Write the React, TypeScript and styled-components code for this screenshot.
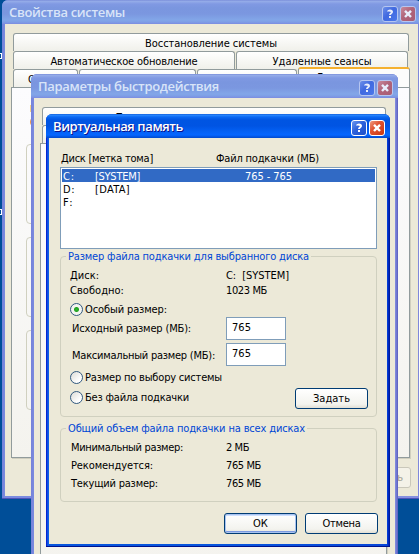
import React, { useLayoutEffect, useRef, useState } from 'react';
import styled, { createGlobalStyle, css } from 'styled-components';

const Global = createGlobalStyle`
  *, *::before, *::after { box-sizing: border-box; }
  body { margin: 0; overflow: hidden; }
`;

const Desktop = styled.div`
  position: relative;
  width: 419px;
  height: 554px;
  overflow: hidden;
  background: #004e98;
  font: 11px/13px 'DejaVu Sans Condensed', 'DejaVu Sans', Tahoma, sans-serif;
  font-stretch: condensed;
  color: #000;
`;

const IconLabelEdge = styled.div<{ $top: number }>`
  position: absolute;
  left: -4px;
  top: ${p => p.$top}px;
  width: 6px;
  height: 6px;
  border: 1px solid #fff;
`;

const Span = styled.span`
  display: inline-block;
  justify-self: start;
  white-space: pre;
`;

/* Text whose tracking is adjusted so that it fills the given width. */
function Text({ w, children }: { w: number; children: string }) {
  const ref = useRef<HTMLSpanElement>(null);
  const [tracking, setTracking] = useState(0);
  useLayoutEffect(() => {
    if (ref.current) {
      setTracking((w - ref.current.getBoundingClientRect().width) / children.length);
    }
  }, [w, children]);
  return <Span ref={ref} style={{ letterSpacing: tracking }}>{children}</Span>;
}

const Window = styled.section<{ $x: number; $y: number; $w: number; $h: number; $active?: boolean }>`
  position: absolute;
  left: ${p => p.$x}px;
  top: ${p => p.$y}px;
  width: ${p => p.$w}px;
  height: ${p => p.$h}px;
  display: flex;
  flex-direction: column;
  overflow: hidden;
  padding: 0 3px 3px;
  border-radius: 6px 6px 0 0;
  background: ${p => (p.$active
    ? 'linear-gradient(90deg, #0019cf 0, #0831d9 1px, #166aee 2px, #0855dd 3px, #0855dd 50%, #0846d8 calc(100% - 3px), #0030d0 calc(100% - 2px), #00138c 100%)'
    : 'linear-gradient(90deg, #7582d8 0, #7b8be0 3px, #7b8be0 50%, #8690e0 calc(100% - 3px), #6a70cc calc(100% - 1px), #5a5cbb 100%)')};
  box-shadow: inset 0 -1px 0 ${p => (p.$active ? '#00138c' : '#4f53b9')};
`;

const TitleBar = styled.header<{ $active?: boolean }>`
  flex: none;
  display: flex;
  align-items: center;
  gap: 2px;
  height: 24px;
  margin: 0 -3px;
  padding: 3px 5px 0 7px;
  font: 600 13px/18px 'Open Sans', 'Noto Sans', sans-serif;
  ${p => (p.$active
    ? css`
        color: #fff;
        text-shadow: 1px 1px 0 #0f1089;
        background: linear-gradient(#0a50d0 0, #2b8bff 1px, #0a68f2 3px, #0055e2 6px, #0054e3 12px, #0462f6 18px, #0566ff 21px, #0149cd 24px);
      `
    : css`
        color: #d8e4f8;
        background: linear-gradient(#7083d5 0, #97aee9 1px, #8099e3 4px, #7a96df 8px, #7b97e0 14px, #82a6e8 20px, #7e9ee6 22px, #7b8be0 24px);
      `)}
`;

const TitleText = styled.h1`
  flex: 1;
  height: 21px;
  margin: 0;
  font: inherit;
`;

const CaptionButton = styled.button<{ $kind: 'help' | 'close'; $active?: boolean }>`
  display: grid;
  place-items: center;
  width: 16px;
  height: 16px;
  padding: 0;
  border: 1px solid ${p => (p.$active ? '#fff' : '#b6c6f0')};
  border-radius: 3px;
  color: ${p => (p.$active ? '#fff' : '#e8edfb')};
  background: ${p => {
    if (p.$kind === 'help') {
      return p.$active
        ? 'linear-gradient(135deg, #6b97f0, #2d61db 45%, #1c4fc8)'
        : 'linear-gradient(135deg, #6d8fe8, #4069e0 45%, #4c78ea)';
    }
    return p.$active
      ? 'linear-gradient(135deg, #f09a80, #e05331 40%, #c93610)'
      : 'linear-gradient(135deg, #c98a9c, #b0647a 45%, #a85c74)';
  }};
`;

const Glyph = styled.svg`
  display: block;
  width: 14px;
  height: 14px;
  fill: none;
  stroke: currentColor;
  stroke-width: 2;
`;

function Caption({ title, w, active }: { title: string; w: number; active?: boolean }) {
  return (
    <TitleBar $active={active}>
      <TitleText><Text w={w}>{title}</Text></TitleText>
      <CaptionButton $kind="help" $active={active} aria-label="Справка">
        <Glyph viewBox="0 0 14 14">
          <path d="M5 4.6C5 3.2 9 3.2 9 5C9 6.3 7 6.2 7 8M7 9V11" />
        </Glyph>
      </CaptionButton>
      <CaptionButton $kind="close" $active={active} aria-label="Закрыть">
        <Glyph viewBox="0 0 14 14">
          <path d="M4 3.8L10 10M10 3.8L4 10" strokeWidth="2.4" />
        </Glyph>
      </CaptionButton>
    </TitleBar>
  );
}

const Body = styled.div<{ $pad: string }>`
  flex: 1;
  min-height: 0;
  display: flex;
  flex-direction: column;
  padding: ${p => p.$pad};
  background: #ece9d8;
`;

const TabRow = styled.div<{ $w: number }>`
  flex: none;
  display: flex;
  gap: 1px;
  width: ${p => p.$w}px;
  height: 18px;
  margin-left: 2px;
`;

const Tab = styled.div<{ $w: number; $selected?: boolean }>`
  flex: none;
  width: ${p => p.$w}px;
  padding-top: 3px;
  text-align: center;
  border: 1px solid #919b9c;
  border-bottom: 0;
  border-radius: 3px 3px 0 0;
  background: linear-gradient(#fff, #f0f0ea);
  ${p => p.$selected && css`
    margin-top: -2px;
    padding-top: 2px;
    border-top: 2px solid #f5b12f;
    background: #fcfcfb;
  `}
`;

const TabPanel = styled.div<{ $w: number; $h: number }>`
  flex: none;
  display: flex;
  flex-direction: column;
  width: ${p => p.$w}px;
  height: ${p => p.$h}px;
  padding: 17px 14px 0;
  border: 1px solid #919b9c;
  background: linear-gradient(#fcfcfe, #f4f3ee);
  box-shadow: 1px 1px 0 #d0cebf;
`;

const Emblem = styled.svg`
  flex: none;
  width: 24px;
  height: 24px;
  margin: 0 0 15px 4px;
`;

const PanelGroup = styled.div`
  flex: none;
  height: 80px;
  margin-bottom: 13px;
  border: 1px solid #d0d0bf;
  border-radius: 4px;
`;

const Actions = styled.div<{ $top: number; $shift?: number }>`
  display: flex;
  justify-content: flex-end;
  gap: 8px;
  margin: ${p => p.$top}px ${p => -(p.$shift ?? 0)}px 0 0;
`;

const Button = styled.button<{ $focus?: boolean }>`
  flex: none;
  width: 73px;
  height: 21px;
  padding: 0;
  border: 1px solid #003c74;
  border-radius: 3px;
  font: inherit;
  line-height: 17px;
  color: #000;
  background: linear-gradient(#fff, #f3f3ee 80%, #e2dfd4);
  ${p => p.$focus && css`
    box-shadow: inset 0 0 0 1px #a9c3f0, inset 0 2px 0 #cee0ff, inset 0 -2px 0 #7c9ae0;
  `}
  &:disabled {
    color: #a1a192;
    border-color: #c9c7ba;
    background: #f4f2e8;
  }
`;

const Columns = styled.div<{ $left: number; $second: number }>`
  flex: none;
  display: grid;
  grid-template-columns: ${p => p.$second - p.$left}px auto;
  padding-left: ${p => p.$left}px;
  height: 13px;
`;

const List = styled.div`
  flex: none;
  height: 82px;
  margin-top: 2px;
  padding: 1px;
  border: 1px solid #7f9db9;
  background: #fff;
`;

const ListRow = styled.div<{ $selected?: boolean }>`
  display: grid;
  grid-template-columns: 32px 150px auto;
  height: 13px;
  padding-left: 1px;
  line-height: 15px;
  ${p => p.$selected && css`
    color: #fff;
    background: #316ac5;
  `}
`;

const Group = styled.fieldset<{ $h: number; $top: number }>`
  flex: none;
  display: flex;
  flex-direction: column;
  min-width: 0;
  height: ${p => p.$h}px;
  margin: ${p => p.$top}px 0 0;
  padding: 0;
  border: 1px solid #d0d0bf;
  border-radius: 4px;
`;

const Legend = styled.legend`
  height: 13px;
  margin-left: 5px;
  padding: 0 2px;
  color: #0046d5;
`;

const GroupContent = styled.div<{ $gap: number; $top: number }>`
  display: flex;
  flex-direction: column;
  gap: ${p => p.$gap}px;
  padding-top: ${p => p.$top}px;
`;

const RadioRow = styled.label<{ $top: number }>`
  display: flex;
  gap: 2px;
  height: 13px;
  margin: ${p => p.$top}px 0 0 9px;
`;

const RadioMark = styled.span<{ $on?: boolean }>`
  width: 13px;
  height: 13px;
  border: 1px solid #31597f;
  border-radius: 50%;
  background: ${p => (p.$on
    ? 'radial-gradient(circle, #2fb82b 0, #21a121 2px, #f4f4f0 3px)'
    : 'linear-gradient(135deg, #dcdcd7, #fff 75%)')};
`;

const Field = styled.div<{ $top: number }>`
  display: grid;
  grid-template-columns: 154px 60px;
  height: 23px;
  margin: ${p => p.$top}px 0 0 11px;
`;

const FieldLabel = styled.span<{ $top: number }>`
  padding-top: ${p => p.$top}px;
`;

const Input = styled.div`
  border: 1px solid #7f9db9;
  padding: 3px 5px;
  background: #fff;
`;

const LastRow = styled.div`
  display: flex;
  justify-content: space-between;
  height: 28px;
  padding-right: 8px;
`;

function Radio({ top, on, w, children }: { top: number; on?: boolean; w: number; children: string }) {
  return (
    <RadioRow $top={top}>
      <RadioMark $on={on} />
      <Text w={w}>{children}</Text>
    </RadioRow>
  );
}

function Pair({ left, a, aw, b, bw }: { left: number; a: string; aw: number; b: string; bw: number }) {
  return (
    <Columns $left={left} $second={165}>
      <Text w={aw}>{a}</Text>
      <Text w={bw}>{b}</Text>
    </Columns>
  );
}

function SystemProperties() {
  return (
    <Window $x={2} $y={0} $w={419} $h={499}>
      <Caption title="Свойства системы" w={116} />
      <Body $pad="9px 7px 0 6px">
        <TabRow $w={396}>
          <Tab $w={396}><Text w={132}>Восстановление системы</Text></Tab>
        </TabRow>
        <TabRow $w={396}>
          <Tab $w={222}><Text w={147}>Автоматическое обновление</Text></Tab>
          <Tab $w={172}><Text w={99}>Удаленные сеансы</Text></Tab>
        </TabRow>
        <TabRow $w={398}>
          <Tab $w={65}><Text w={35}>Общие</Text></Tab>
          <Tab $w={117}><Text w={90}>Имя компьютера</Text></Tab>
          <Tab $w={100}><Text w={76}>Оборудование</Text></Tab>
          <Tab $w={112} $selected><Text w={76}>Дополнительно</Text></Tab>
        </TabRow>
        <TabPanel $w={399} $h={371}>
          <Emblem viewBox="0 0 24 24">
            <path d="M0 0H12V7H0Z" fill="#f8d48c" />
            <circle cx="6" cy="17" r="6" fill="#e8944a" />
          </Emblem>
          <PanelGroup />
          <PanelGroup />
          <PanelGroup />
        </TabPanel>
        <Actions $top={9}>
          <Button disabled><Text w={57}>Применить</Text></Button>
        </Actions>
      </Body>
    </Window>
  );
}

function PerformanceOptions() {
  return (
    <Window $x={31} $y={74} $w={367} $h={500}>
      <Caption title="Параметры быстродействия" w={181} />
      <Body $pad="9px 8px 0 6px">
        <TabRow $w={344}>
          <Tab $w={344}><Text w={197}>Предотвращение выполнения данных</Text></Tab>
        </TabRow>
        <TabRow $w={344}>
          <Tab $w={172}><Text w={108}>Визуальные эффекты</Text></Tab>
          <Tab $w={171}><Text w={76}>Дополнительно</Text></Tab>
        </TabRow>
        <TabPanel $w={347} $h={430} />
      </Body>
    </Window>
  );
}

function VirtualMemory() {
  return (
    <Window $x={46} $y={114} $w={344} $h={433} $active>
      <Caption title="Виртуальная память" w={130} active />
      <Body $pad="14px 10px 0 11px">
        <Columns $left={1} $second={156}>
          <Text w={92}>Диск [метка тома]</Text>
          <Text w={103}>Файл подкачки (МБ)</Text>
        </Columns>
        <List>
          <ListRow $selected>
            <Text w={12}>C:</Text>
            <Text w={45}>[SYSTEM]</Text>
            <Text w={47}>765 - 765</Text>
          </ListRow>
          <ListRow>
            <Text w={12}>D:</Text>
            <Text w={35}>[DATA]</Text>
          </ListRow>
          <ListRow>
            <Text w={11}>F:</Text>
          </ListRow>
        </List>
        <Group $h={167} $top={1}>
          <Legend><Text w={241}>Размер файла подкачки для выбранного диска</Text></Legend>
          <GroupContent $gap={2} $top={6}>
            <Pair left={9} a="Диск:" aw={29} b="C:  [SYSTEM]" bw={63} />
            <Pair left={9} a="Свободно:" aw={54} b="1023 МБ" bw={41} />
          </GroupContent>
          <Radio top={6} on w={82}>Особый размер:</Radio>
          <Field $top={1}>
            <FieldLabel $top={5}><Text w={119}>Исходный размер (МБ):</Text></FieldLabel>
            <Input><Text w={19}>765</Text></Input>
          </Field>
          <Field $top={3}>
            <FieldLabel $top={6}><Text w={143}>Максимальный размер (МБ):</Text></FieldLabel>
            <Input><Text w={19}>765</Text></Input>
          </Field>
          <Radio top={5} w={137}>Размер по выбору системы</Radio>
          <LastRow>
            <Radio top={7} w={104}>Без файла подкачки</Radio>
            <Actions $top={4}><Button><Text w={37}>Задать</Text></Button></Actions>
          </LastRow>
        </Group>
        <Group $h={80} $top={5}>
          <Legend><Text w={237}>Общий объем файла подкачки на всех дисках</Text></Legend>
          <GroupContent $gap={5} $top={6}>
            <Pair left={10} a="Минимальный размер:" aw={112} b="2 МБ" bw={23} />
            <Pair left={10} a="Рекомендуется:" aw={82} b="765 МБ" bw={35} />
            <Pair left={10} a="Текущий размер:" aw={87} b="765 МБ" bw={35} />
          </GroupContent>
        </Group>
        <Actions $top={11} $shift={1}>
          <Button $focus><Text w={15}>ОК</Text></Button>
          <Button><Text w={38}>Отмена</Text></Button>
        </Actions>
      </Body>
    </Window>
  );
}

export default function App() {
  return (
    <>
      <Global />
      <Desktop>
        <IconLabelEdge $top={53} />
        <IconLabelEdge $top={209} />
        <SystemProperties />
        <PerformanceOptions />
        <VirtualMemory />
      </Desktop>
    </>
  );
}
